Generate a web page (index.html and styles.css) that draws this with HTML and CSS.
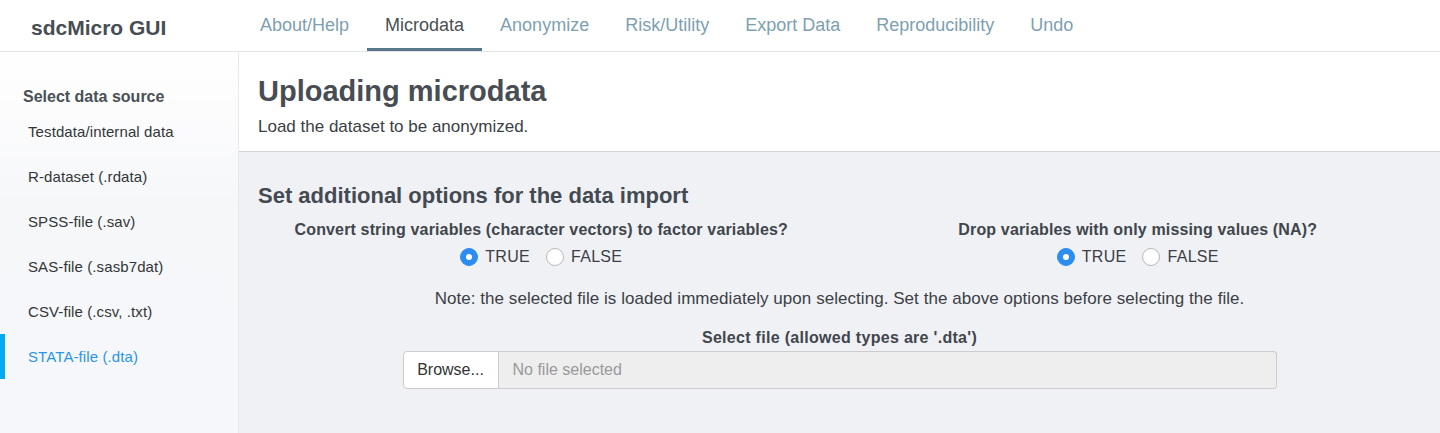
FILE: index.html
```html
<!DOCTYPE html>
<html>
<head>
<meta charset="utf-8">
<link rel="stylesheet" href="styles.css">
</head>
<body>
<header class="topbar">
  <div class="brand">sdcMicro GUI</div>
  <nav class="nav">
    <a class="nav-item">About/Help</a>
    <a class="nav-item active">Microdata</a>
    <a class="nav-item">Anonymize</a>
    <a class="nav-item">Risk/Utility</a>
    <a class="nav-item">Export Data</a>
    <a class="nav-item">Reproducibility</a>
    <a class="nav-item">Undo</a>
  </nav>
</header>
<div class="layout">
  <aside class="sidebar">
    <div class="side-title">Select data source</div>
    <ul class="side-list">
      <li class="side-item">Testdata/internal data</li>
      <li class="side-item">R-dataset (.rdata)</li>
      <li class="side-item">SPSS-file (.sav)</li>
      <li class="side-item">SAS-file (.sasb7dat)</li>
      <li class="side-item">CSV-file (.csv, .txt)</li>
      <li class="side-item active">STATA-file (.dta)</li>
    </ul>
  </aside>
  <main class="main">
    <section class="page-head">
      <h1 class="page-title">Uploading microdata</h1>
      <p class="page-sub">Load the dataset to be anonymized.</p>
    </section>
    <section class="content">
      <h2 class="section-title">Set additional options for the data import</h2>
      <div class="row">
        <div class="col">
          <div class="opt-label">Convert string variables (character vectors) to factor variables?</div>
          <div class="radios">
            <label class="radio"><span class="dot checked"></span>TRUE</label>
            <label class="radio"><span class="dot"></span>FALSE</label>
          </div>
        </div>
        <div class="col">
          <div class="opt-label">Drop variables with only missing values (NA)?</div>
          <div class="radios">
            <label class="radio"><span class="dot checked"></span>TRUE</label>
            <label class="radio"><span class="dot"></span>FALSE</label>
          </div>
        </div>
      </div>
      <p class="note">Note: the selected file is loaded immediately upon selecting. Set the above options before selecting the file.</p>
      <div class="file-label">Select file (allowed types are '.dta')</div>
      <div class="file-input">
        <span class="browse">Browse...</span>
        <span class="file-name">No file selected</span>
      </div>
    </section>
  </main>
</div>
</body>
</html>
```

FILE: styles.css
```css
* { box-sizing: border-box; }
html, body { margin: 0; padding: 0; }
body {
  font-family: "Liberation Sans", Arial, sans-serif;
  color: #3b4046;
  background: #f0f1f5;
  width: 1440px;
  height: 433px;
  overflow: hidden;
}
.topbar {
  height: 52px;
  background: #fff;
  border-bottom: 1px solid #e2e5e9;
  display: flex;
  align-items: stretch;
}
.brand {
  width: 242px;
  padding-left: 31px;
  font-size: 21px;
  font-weight: bold;
  color: #474d53;
  line-height: 55px;
}
.nav { display: flex; align-items: stretch; }
.nav-item {
  padding: 0 18px;
  font-size: 18px;
  color: #7d9fb1;
  line-height: 51px;
  border-bottom: 3px solid transparent;
  height: 51px;
}
.nav-item.active {
  color: #4a4f54;
  border-bottom-color: #577689;
}
.layout { display: flex; height: 381px; }
.sidebar {
  width: 239px;
  flex: none;
  background: linear-gradient(#ffffff, #f6f7f9 40%, #f6f7fa);
  border-right: 1px solid #e7e9ee;
  padding-top: 35px;
}
.side-title {
  padding-left: 23px;
  font-size: 16px;
  font-weight: bold;
  color: #4a5056;
  line-height: 20px;
  margin-bottom: 2px;
}
.side-list { list-style: none; margin: 0; padding: 0; }
.side-item {
  height: 45px;
  line-height: 45px;
  font-size: 15px;
  letter-spacing: 0.1px;
  color: #333638;
  border-left: 5px solid transparent;
  padding-left: 23px;
}
.side-item.active {
  color: #2b95e6;
  border-left-color: #04a9f4;
}
.main { flex: 1; display: flex; flex-direction: column; }
.page-head {
  background: #fff;
  height: 100px;
  border-bottom: 1px solid #d2d4d8;
  padding: 21px 19px 0;
}
.page-title {
  margin: 0;
  font-size: 29px;
  font-weight: bold;
  color: #474d53;
  line-height: 36px;
}
.page-sub {
  margin: 7px 0 0;
  font-size: 17px;
  color: #3b4046;
  line-height: 22px;
}
.content { padding: 31px 19px 0; flex: 1; background: #f0f1f5; }
.section-title {
  margin: 0;
  font-size: 22px;
  font-weight: bold;
  color: #444a51;
  line-height: 26px;
}
.row { display: flex; margin: 0 -15px; }
.col { flex: 1; padding: 0 15px; text-align: center; }
.opt-label {
  font-size: 16px;
  letter-spacing: 0.15px;
  font-weight: bold;
  color: #40464c;
  line-height: 20px;
  margin-top: 11px;
}
.radios {
  display: flex;
  justify-content: center;
  gap: 16px;
  margin-top: 7px;
  height: 20px;
}
.radio {
  display: flex;
  align-items: center;
  gap: 7px;
  font-size: 16px;
  letter-spacing: 0.3px;
  color: #3b4046;
  line-height: 20px;
}
.dot {
  width: 18px;
  height: 18px;
  border-radius: 50%;
  border: 1px solid #b8b8b8;
  background: #fff;
  display: inline-block;
  position: relative;
}
.dot.checked {
  background: #2d8cf0;
  border-color: #2d8cf0;
}
.dot.checked::after {
  content: "";
  position: absolute;
  left: 5px; top: 5px;
  width: 6px; height: 6px;
  border-radius: 50%;
  background: #fff;
}
.note {
  margin: 22px 0 0;
  text-align: center;
  font-size: 17px;
  letter-spacing: 0.05px;
  color: #3b4046;
  line-height: 20px;
}
.file-label {
  margin-top: 19px;
  text-align: center;
  font-size: 16px;
  letter-spacing: 0.3px;
  font-weight: bold;
  color: #40464c;
  line-height: 20px;
}
.file-input {
  display: flex;
  width: 874px;
  height: 38px;
  margin: 3px auto 0;
}
.browse {
  width: 96px;
  border: 1px solid #ccc;
  border-radius: 4px 0 0 4px;
  background: #fff;
  font-size: 16px;
  color: #333;
  line-height: 36px;
  text-align: center;
}
.file-name {
  flex: 1;
  border: 1px solid #ccc;
  border-left: none;
  border-radius: 0 4px 4px 0;
  background: #eeeeee;
  font-size: 16px;
  color: #999;
  line-height: 36px;
  padding-left: 14px;
}
```
